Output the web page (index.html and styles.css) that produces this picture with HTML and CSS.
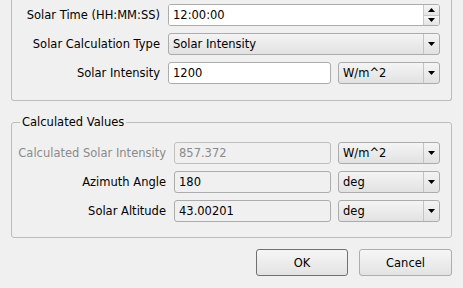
FILE: index.html
```html
<!DOCTYPE html>
<html lang="en">
<head>
    <meta charset="UTF-8">
    <title>Solar Settings</title>
    <link rel="stylesheet" href="styles.css">
</head>
<body>
    <div class="dialog">
        <div class="group group-top">
            <div class="form-grid grid-top">
                <label class="label">Solar Time (HH:MM:SS)</label>
                <div class="spinbox span-2">
                    <input class="field-input" type="text" value="12:00:00">
                    <div class="spin-buttons">
                        <div class="spin-btn">
                            <svg width="7" height="4" viewBox="0 0 7 4"><path d="M0 4 L3.5 0 L7 4 Z" fill="#000"/></svg>
                        </div>
                        <div class="spin-btn">
                            <svg width="7" height="4" viewBox="0 0 7 4"><path d="M0 0 L7 0 L3.5 4 Z" fill="#000"/></svg>
                        </div>
                    </div>
                </div>

                <label class="label">Solar Calculation Type</label>
                <div class="combo span-2">
                    <span class="combo-text">Solar Intensity</span>
                    <span class="combo-arrow"><svg width="7" height="4" viewBox="0 0 7 4"><path d="M0 0 L7 0 L3.5 4 Z" fill="#000"/></svg></span>
                </div>

                <label class="label">Solar Intensity</label>
                <input class="line-edit" type="text" value="1200">
                <div class="combo">
                    <span class="combo-text">W/m^2</span>
                    <span class="combo-arrow"><svg width="7" height="4" viewBox="0 0 7 4"><path d="M0 0 L7 0 L3.5 4 Z" fill="#000"/></svg></span>
                </div>
            </div>
        </div>

        <fieldset class="group group-calc">
            <legend class="group-title">Calculated Values</legend>
            <div class="form-grid grid-calc">
                <label class="label disabled">Calculated Solar Intensity</label>
                <input class="line-edit readonly disabled" type="text" value="857.372" disabled>
                <div class="combo">
                    <span class="combo-text">W/m^2</span>
                    <span class="combo-arrow"><svg width="7" height="4" viewBox="0 0 7 4"><path d="M0 0 L7 0 L3.5 4 Z" fill="#000"/></svg></span>
                </div>

                <label class="label">Azimuth Angle</label>
                <input class="line-edit readonly" type="text" value="180" readonly>
                <div class="combo">
                    <span class="combo-text">deg</span>
                    <span class="combo-arrow"><svg width="7" height="4" viewBox="0 0 7 4"><path d="M0 0 L7 0 L3.5 4 Z" fill="#000"/></svg></span>
                </div>

                <label class="label">Solar Altitude</label>
                <input class="line-edit readonly" type="text" value="43.00201" readonly>
                <div class="combo">
                    <span class="combo-text">deg</span>
                    <span class="combo-arrow"><svg width="7" height="4" viewBox="0 0 7 4"><path d="M0 0 L7 0 L3.5 4 Z" fill="#000"/></svg></span>
                </div>
            </div>
        </fieldset>

        <div class="button-row">
            <button class="button default">OK</button>
            <button class="button">Cancel</button>
        </div>
    </div>
</body>
</html>
```

FILE: styles.css
```css
* {
    margin: 0;
    padding: 0;
    box-sizing: border-box;
}

body {
    font-family: 'DejaVu Sans', Verdana, sans-serif;
    font-size: 11.5px;
    color: #000;
    background: #f0f0f0;
    width: 463px;
    height: 288px;
    overflow: hidden;
}

.dialog {
    padding: 0 11px;
}

.group {
    border: 1px solid #bcbcbc;
    border-radius: 3px;
}

.group-top {
    border-top: none;
    border-radius: 0 0 3px 3px;
    padding: 4px 10px 16px 0;
}

.group-calc {
    margin-top: 14px;
    padding: 12px 10px 15px 0;
    min-width: 0;
}

.group-title {
    margin-left: 8px;
    padding: 0 2px;
    line-height: 15px;
}

.form-grid {
    display: grid;
    grid-auto-rows: 22px;
    row-gap: 7px;
    column-gap: 7px;
    align-items: stretch;
}

.grid-top {
    grid-template-columns: 149px 163px 102px;
}

.grid-calc {
    grid-template-columns: 155px 157px 102px;
}

.label {
    display: flex;
    align-items: center;
    justify-content: flex-end;
    white-space: nowrap;
    padding-right: 1px;
}

.label.disabled {
    color: #8b8b8b;
}

.span-2 {
    grid-column: span 2;
}

.line-edit,
.field-input {
    font: inherit;
    color: #000;
    border: 1px solid #acacac;
    border-radius: 3px;
    background: #fff;
    padding: 0 4px;
    outline: none;
    width: 100%;
    height: 100%;
}

.line-edit.readonly {
    background: #f0f0f0;
}

.line-edit.disabled {
    color: #8b8b8b;
    border-color: #bfbfbf;
}

.spinbox {
    display: flex;
    border: 1px solid #acacac;
    border-radius: 3px;
    background: #fff;
    overflow: hidden;
}

.spinbox .field-input {
    border: none;
    border-radius: 0;
    flex: 1;
}

.spin-buttons {
    display: flex;
    flex-direction: column;
    width: 16px;
    border-left: 1px solid #c8c8c8;
}

.spin-btn {
    flex: 1;
    display: flex;
    align-items: center;
    justify-content: center;
    background: linear-gradient(#f6f6f6, #e4e4e4);
}

.spin-btn + .spin-btn {
    border-top: 1px solid #c8c8c8;
}

.combo {
    display: flex;
    align-items: center;
    border: 1px solid #acacac;
    border-radius: 3px;
    background: linear-gradient(#f4f4f4, #e2e2e2);
}

.combo-text {
    flex: 1;
    padding-left: 4px;
    white-space: nowrap;
}

.combo-arrow {
    display: flex;
    align-items: center;
    justify-content: center;
    width: 16px;
    height: 100%;
    border-left: 1px solid #c4c4c4;
}

.button-row {
    display: flex;
    justify-content: flex-end;
    gap: 11px;
    margin-top: 11px;
}

.button {
    font: inherit;
    color: #000;
    width: 93px;
    height: 27px;
    border: 1px solid #adadad;
    border-radius: 3px;
    background: linear-gradient(#f6f6f6, #e3e3e3);
}

.button.default {
    width: 92px;
    border-color: #707070;
}
```
